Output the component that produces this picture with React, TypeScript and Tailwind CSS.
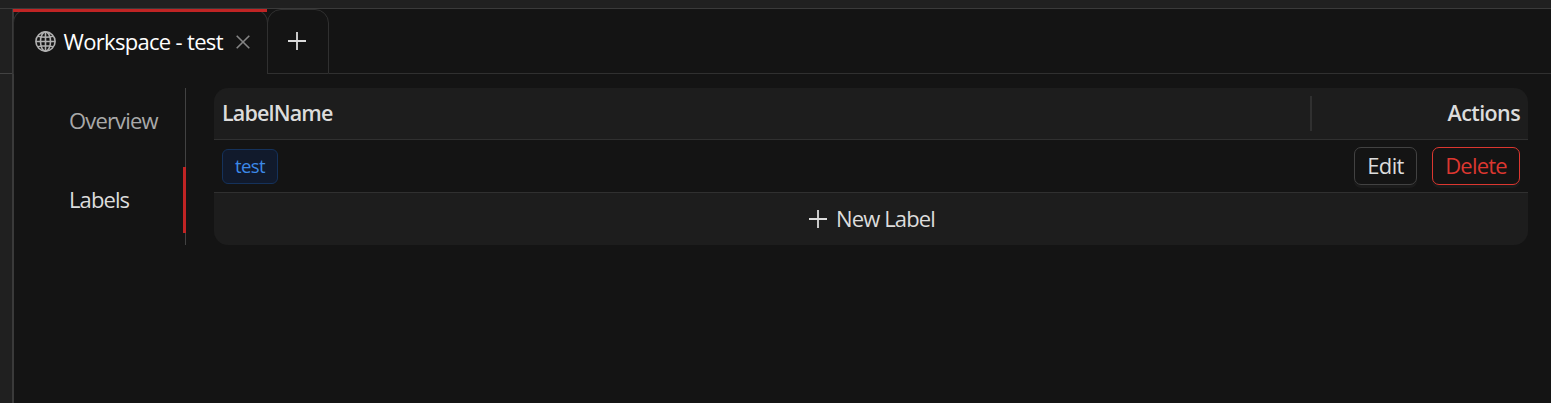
const Globe = () => (
  <svg width="21" height="21" viewBox="0 0 21 21" fill="none" stroke="#b0b0b0" strokeWidth="1.6" className="mb-px shrink-0">
    <circle cx="10.5" cy="10.5" r="9.6" />
    <ellipse cx="10.5" cy="10.5" rx="5" ry="9.6" />
    <path d="M10.5 1v19M1 10.5h19M2.9 5.2q7.6 2 15.2 0M2.9 15.8q7.6-2 15.2 0" />
  </svg>
);

const Plus = ({ className }: { className?: string }) => (
  <svg width="18" height="18" viewBox="0 0 18 18" fill="none" stroke="currentColor" strokeWidth="1.8" className={className}>
    <path d="M9 0v18M0 9h18" />
  </svg>
);

const Tabs = () => (
  <div className="flex h-[65px] shrink-0">
    <div className="relative -ml-px -mr-px flex h-full w-[255px] shrink-0 items-center rounded-t-[14px] border-x border-t border-[#303030] pl-[21px]">
      <div className="absolute -left-px -top-px h-[3px] w-[254px] bg-[#c02424]" />
      <Globe />
      <span className="ml-[7.5px] w-[159.5px] whitespace-nowrap pb-[3px] text-[22px] leading-8 tracking-[-0.68px] text-white">Workspace - test</span>
      <svg width="14" height="14" viewBox="0 0 14 14" fill="none" stroke="#858585" strokeWidth="1.6" className="ml-[13px] shrink-0">
        <path d="M.7.7l12.6 12.6M13.3.7L.7 13.3" />
      </svg>
    </div>
    <div className="flex h-full w-[62px] shrink-0 items-center justify-center rounded-t-[14px] border border-[#303030] pb-px text-[#dcdcdc]">
      <Plus className="-translate-x-px" />
    </div>
    <div className="flex-1 border-b border-[#303030]" />
  </div>
);

const SideMenu = () => (
  <nav className="flex h-[157px] w-[172px] shrink-0 flex-col border-r border-[#424242] text-[22px] leading-8">
    <div className="flex h-[66px] items-center pb-[2px] pl-[55px] text-[#a9a9a9]">
      <span className="whitespace-nowrap tracking-[-0.85px]">Overview</span>
    </div>
    <div className="relative mt-[13px] flex h-[66px] items-center pb-[2px] pl-[55px] text-[#dcdcdc]">
      <span className="whitespace-nowrap tracking-[-0.9px]">Labels</span>
      <div className="absolute -right-px top-0 h-[66px] w-[3px] bg-[#c02424]" />
    </div>
  </nav>
);

const LabelTable = () => (
  <div className="mr-[23px] ml-7 h-[157px] flex-1 overflow-hidden rounded-[14px] text-[22px] leading-8 text-[#dcdcdc]">
    <div className="flex h-[52px] items-center justify-between border-b border-[#303030] bg-[#1d1d1d] px-2 font-semibold">
      <span className="whitespace-nowrap pb-px text-[21.5px] tracking-[-0.85px]">LabelName</span>
      <div className="flex h-[35px] w-[210px] items-center justify-end border-l-2 border-[#303030]">
        <span className="whitespace-nowrap pb-px text-[21.5px] tracking-[-0.6px]">Actions</span>
      </div>
    </div>
    <div className="flex h-[53px] items-center justify-between border-b border-[#303030] px-2">
      <span className="flex h-[35px] w-14 items-center justify-center rounded-md border border-[#15325b] bg-[#111a2c] text-[18.5px] text-[#3c89e8]">
        <span className="tracking-[-0.6px]">test</span>
      </span>
      <div className="flex gap-[15px]">
        <button className="flex h-[38px] w-[63px] items-center justify-center rounded-[7px] border border-[#424242] pb-[2px] shadow-[0_3px_0_#1b1b1b]">
          <span className="tracking-[-0.6px]">Edit</span>
        </button>
        <button className="flex h-[38px] w-[88px] items-center justify-center rounded-[7px] border border-[#dc3730] pb-[2px] text-[#dc3730] shadow-[0_3px_0_#1b1b1b]">
          <span className="tracking-[-0.8px]">Delete</span>
        </button>
      </div>
    </div>
    <div className="flex h-[52px] items-center justify-center gap-[9px] bg-[#1d1d1d] pl-[2px]">
      <Plus />
      <span className="whitespace-nowrap pb-[2px] tracking-[-0.85px]">New Label</span>
    </div>
  </div>
);

export default function App() {
  return (
    <div className="flex h-[403px] w-[1551px] flex-col overflow-hidden bg-[#141414] font-['Open_Sans','Noto_Sans',sans-serif]">
      <div className="h-[9px] shrink-0 border-b border-[#3a3a3a] bg-[#202020]" />
      <div className="flex min-h-0 flex-1">
        <div className="flex w-3 shrink-0 flex-col bg-[#202020]">
          <div className="h-[65px] border-b border-[#424242]" />
        </div>
        <div className="flex min-w-0 flex-1 flex-col border-l-2 border-[#3a3a3a]">
          <Tabs />
          <main className="mt-[14px] flex">
            <SideMenu />
            <LabelTable />
          </main>
        </div>
      </div>
    </div>
  );
}
